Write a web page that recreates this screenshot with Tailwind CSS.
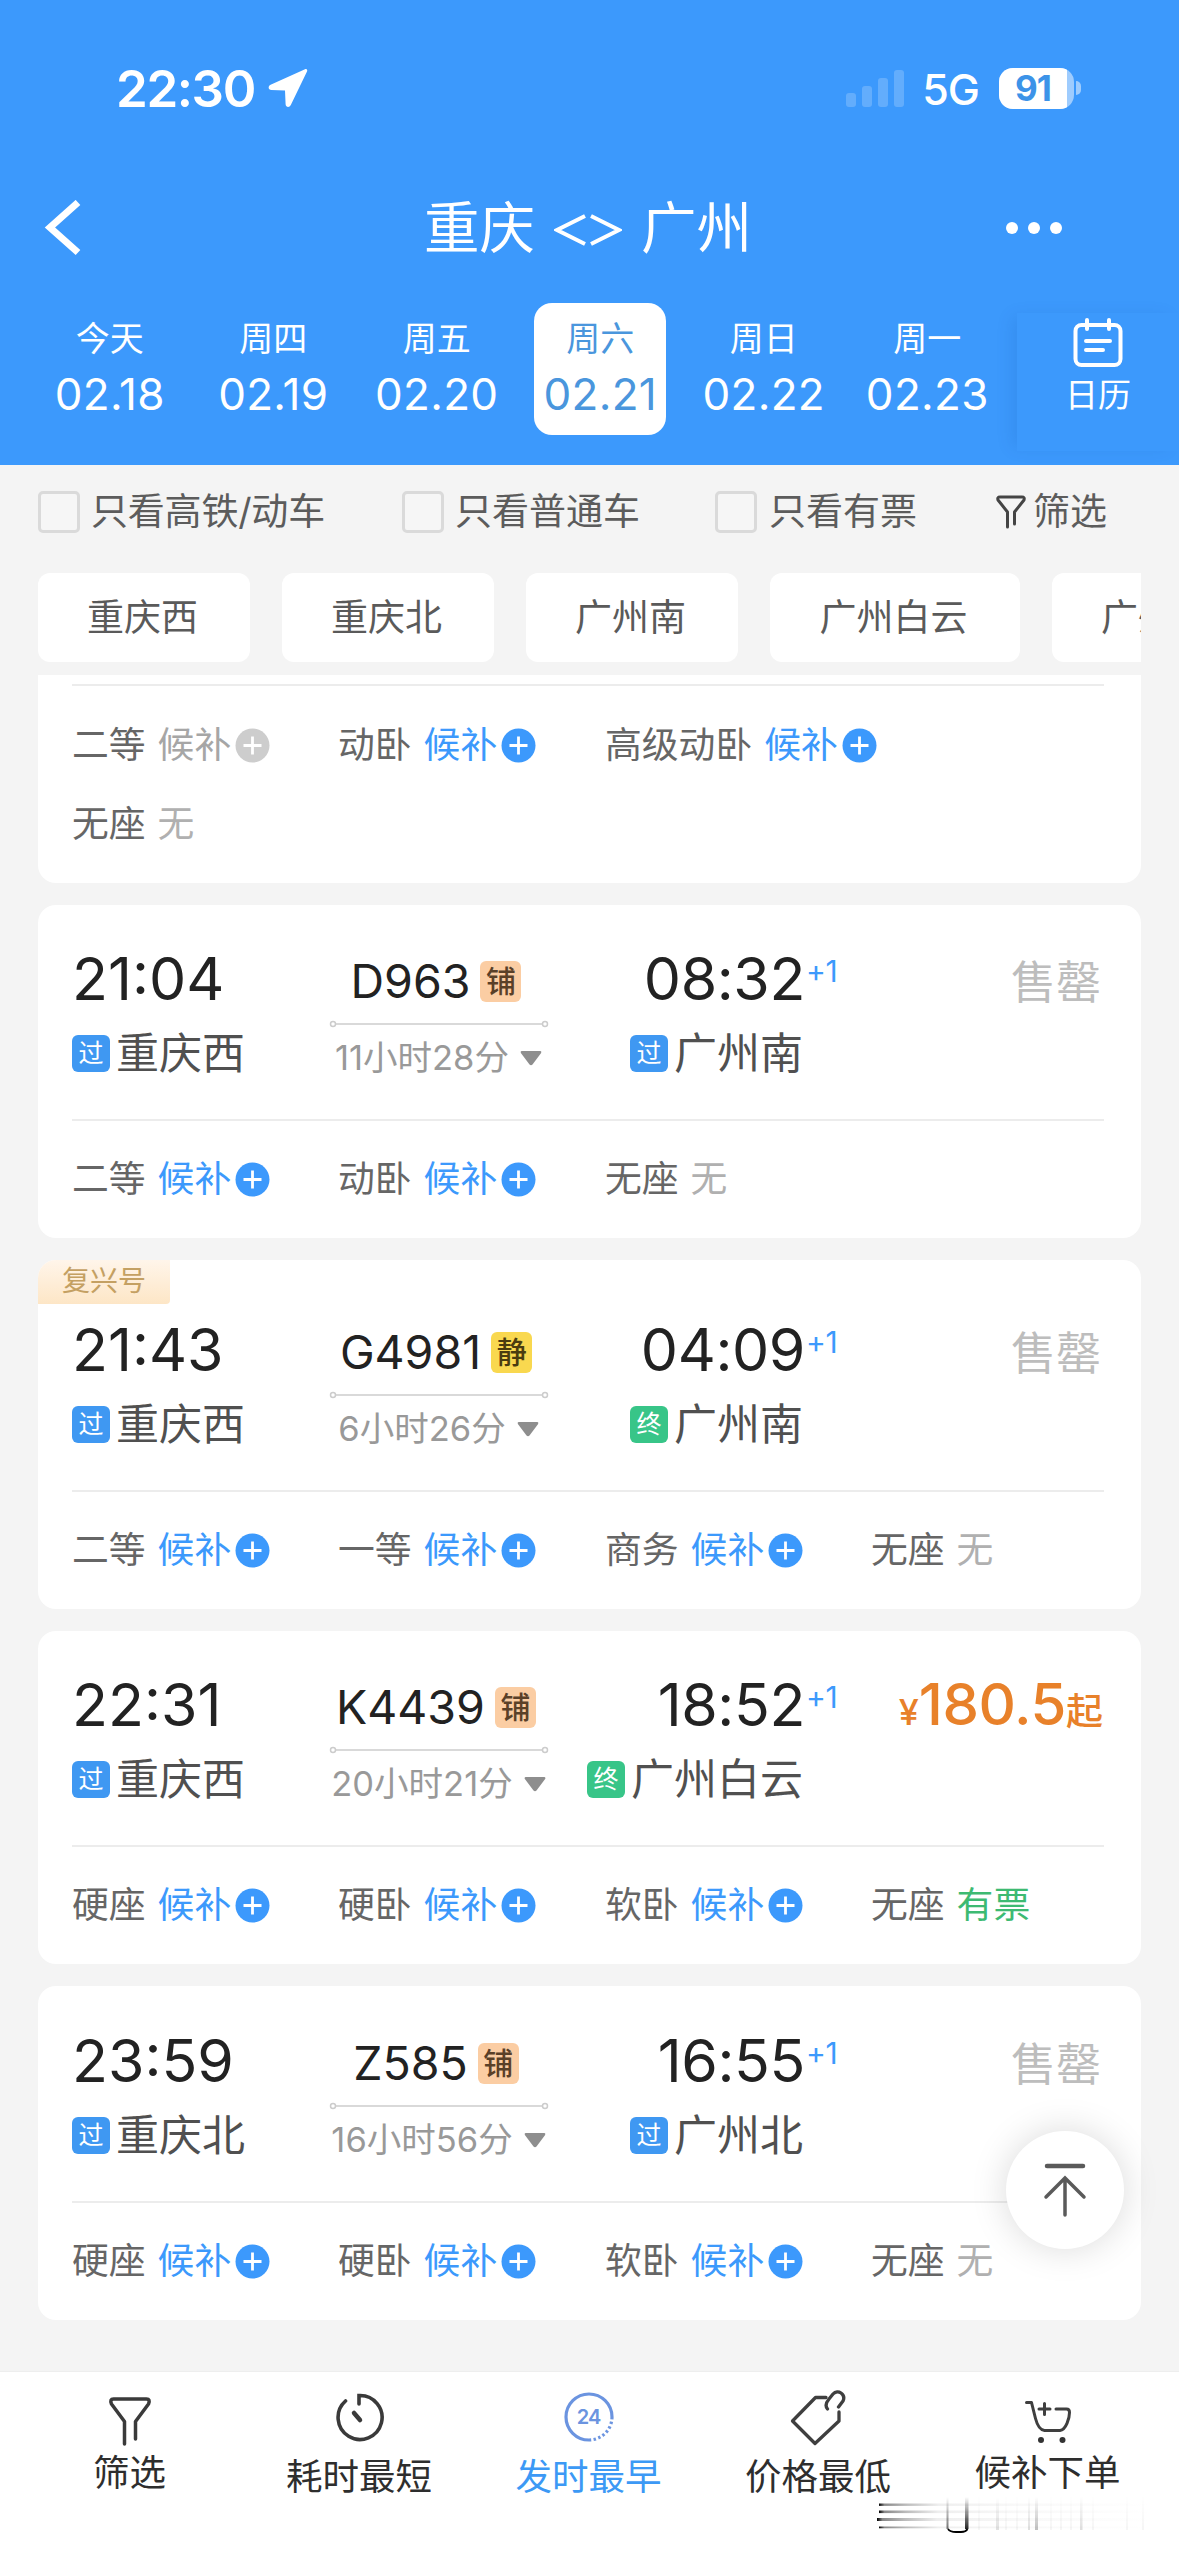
<!DOCTYPE html>
<html lang="zh-CN">
<head>
<meta charset="utf-8">
<title>重庆 - 广州</title>
<script src="https://cdn.jsdelivr.net/npm/@tailwindcss/browser@4"></script>
</head>
<body class="relative flex h-[2556px] w-[1179px] flex-col overflow-hidden bg-[#f4f4f4] font-['Inter','Noto_Sans_CJK_SC',sans-serif] whitespace-nowrap">

<header class="flex h-[465px] flex-col bg-[#3c99fc] text-white">
  <!-- status bar -->
  <div class="flex h-[176px] items-center pl-[116px] pr-[98px]">
    <span class="text-[51px] font-semibold leading-none tracking-[-1.400px]">22:30</span>
    <svg class="ml-[13px] size-10" viewBox="0 0 40 40" fill="currentColor"><path d="M37 1.200 2.600 16.800c-3 1.400-2.400 5 .8 5.200L17 22.600l.6 13.600c.2 3.200 3.800 3.800 5.200.8L39 3.400c.8-1.600-.6-2.900-2-2.200z"/></svg>
    <div class="ml-auto flex h-[38px] items-end gap-[6px]">
      <i class="h-[14px] w-[10px] rounded-[3px] bg-white/20"></i>
      <i class="h-[21px] w-[10px] rounded-[3px] bg-white/20"></i>
      <i class="h-[29px] w-[10px] rounded-[3px] bg-white/20"></i>
      <i class="h-[37px] w-[10px] rounded-[3px] bg-white/20"></i>
    </div>
    <span class="ml-[18px] mt-[3px] text-[43px] font-medium leading-none tracking-[-1px]">5G</span>
    <div class="ml-[20px] flex h-[41px] w-[75px] items-center overflow-hidden rounded-[14px] bg-white/50">
      <span class="flex h-full w-[68px] items-center justify-center bg-white text-[35px] font-bold leading-none tracking-[-1px] text-[#3c93e8]">91</span>
    </div>
    <i class="ml-[2px] h-[14px] w-[5px] rounded-r-full bg-white/50"></i>
  </div>
  <!-- title bar -->
  <div class="flex h-[103px] items-center justify-between pl-[42px] pr-[117px]">
    <svg class="h-[56px] w-[40px]" viewBox="0 0 40 56" fill="none" stroke="currentColor" stroke-width="7"><path d="M36 2.500 8 27.500l28 25"/></svg>
    <h1 class="flex items-center gap-[19px] pl-[88px] text-[55.500px] leading-none"><span>重庆</span>
      <svg class="mt-1 h-[34px] w-[68px]" viewBox="0 0 68 34" fill="none" stroke="currentColor" stroke-width="4"><path d="M31 3 3 17l28 14M37 3l28 14-28 14"/></svg><span>广州</span></h1>
    <div class="flex gap-[10px]"><i class="size-3 rounded-full bg-white"></i><i class="size-3 rounded-full bg-white"></i><i class="size-3 rounded-full bg-white"></i></div>
  </div>
  <!-- dates -->
  <div class="flex flex-1 pl-[28px] pt-[24px]">
    <div id="dates" class="flex w-[989px]"></div>
    <div class="mt-[10px] flex h-[138px] w-[162px] flex-col items-center bg-[#3c99fc] pt-[5px] shadow-[-8px_0_16px_-4px_rgba(0,60,150,0.13)]">
      <svg class="h-[50px] w-[50px]" viewBox="0 0 50 50" fill="none" stroke="currentColor" stroke-width="4" stroke-linecap="round"><rect x="2.500" y="7" width="45" height="40" rx="6"/><path d="M14 2v9M36 2v9M13 23h24M13 32h17"/></svg>
      <span class="mt-[7px] text-[33px] leading-[40px]">日历</span>
    </div>
  </div>
</header>

<section class="flex h-[93px] items-center text-[37px] leading-none text-[#5c5c5c]">
  <i class="ml-[38px] size-[42px] rounded-[5px] border-[3px] border-[#dadada] bg-[#f6f6f6]"></i><span class="ml-[11px] w-[311px] tracking-[-0.200px]">只看高铁/动车</span>
  <i class="size-[42px] rounded-[5px] border-[3px] border-[#dadada] bg-[#f6f6f6]"></i><span class="ml-[11px] w-[260px]">只看普通车</span>
  <i class="size-[42px] rounded-[5px] border-[3px] border-[#dadada] bg-[#f6f6f6]"></i><span class="ml-[12px] w-[226px]">只看有票</span>
  <svg class="h-[34px] w-[32px]" viewBox="0 0 32 34" fill="none" stroke="#444" stroke-width="3" stroke-linejoin="round" stroke-linecap="round"><path d="M12.500 32V17L3 5q-1-3 2-3h22q3 0 2 3l-9.500 12v12"/></svg>
  <span class="ml-[6px]">筛选</span>
</section>

<nav class="mx-[38px] mt-[15px] flex h-[89px] gap-[32px] overflow-hidden text-[37px] leading-none text-[#5a5a5a]">
  <a class="flex w-[212px] shrink-0 items-center justify-center rounded-xl bg-white pr-[3px] pb-px">重庆西</a>
  <a class="flex w-[212px] shrink-0 items-center justify-center rounded-xl bg-white pr-[3px] pb-px">重庆北</a>
  <a class="flex w-[212px] shrink-0 items-center justify-center rounded-xl bg-white pr-[3px] pb-px">广州南</a>
  <a class="flex w-[250px] shrink-0 items-center justify-center rounded-xl bg-white pr-[3px] pb-px">广州白云</a>
  <a class="flex w-[212px] shrink-0 items-center justify-center rounded-xl bg-white pr-[3px] pb-px">广州北</a>
</nav>

<main id="list" class="mt-[13px] flex flex-1 flex-col gap-[22px] px-[38px]"></main>

<button class="absolute left-[1006px] top-[2131px] flex size-[118px] items-center justify-center rounded-full bg-white shadow-[0_0_36px_rgba(0,0,0,0.15)]">
  <svg class="h-[56px] w-[46px]" viewBox="0 0 46 56" fill="none" stroke="#5a5a5a" stroke-width="4.500" stroke-linecap="round"><path d="M5 4h36"/><path stroke-width="3.500" d="M23 17v36M4 35l19-19 19 19"/></svg>
</button>

<footer class="relative flex h-[185px] border-t border-[#eeeeee] bg-white pl-[15px] text-[36.500px] text-[#2e2e2e]">
  <a class="flex w-[229px] flex-col items-center">
    <svg class="mt-[24px] h-[50px] w-[44px]" viewBox="0 0 44 50" fill="none" stroke="#3a3a3a" stroke-width="3.500" stroke-linecap="round" stroke-linejoin="round"><path d="M16.500 48V25.500L3.500 8q-2-5 2-5h33q4 0 2 5l-13 17.500V43"/></svg>
    <span class="mt-[7px] leading-[40px]">筛选</span>
  </a>
  <a class="flex w-[230px] flex-col items-center">
    <svg class="mt-[19px] h-[52px] w-[50px]" viewBox="0 0 50 52" fill="none" stroke="#3a3a3a" stroke-width="3.600" stroke-linecap="round"><path d="M11.500 10A22 22 0 1 0 25 4.500V13"/><path stroke-width="4.500" d="m20 22 6 7"/></svg>
    <span class="mt-[14px] leading-[40px]">耗时最短</span>
  </a>
  <a class="flex w-[229px] flex-col items-center text-[#3c99f5]">
    <div class="relative mt-[20px] flex size-[50px] items-center justify-center">
      <svg class="absolute inset-0 size-[50px]" viewBox="0 0 50 50" fill="none" stroke="#6b94e0" stroke-width="3.200"><path d="M25 48A23 23 0 1 1 48 25"/><path stroke-dasharray="2.400 2.400" d="M48 25A23 23 0 0 1 25 48"/></svg>
      <span class="text-[20px] font-semibold leading-none tracking-[-1px] text-[#6b94e0]">24</span>
    </div>
    <span class="mt-[15px] leading-[40px]">发时最早</span>
  </a>
  <a class="flex w-[230px] flex-col items-center">
    <svg class="mt-[16px] h-[58px] w-[56px]" viewBox="0 0 56 58" fill="none" stroke="#3f3f3f" stroke-width="3.300" stroke-linecap="round" stroke-linejoin="round"><path d="M36 9.500H25.500L2.500 33l22.500 22.500 24-22.500V24"/><path d="M37.500 21c-3-3.500-1-7 1.500-10l4-5c5-5.500 13 .5 10 7l-4.500 6"/></svg>
    <span class="mt-[11px] leading-[40px]">价格最低</span>
  </a>
  <a class="flex w-[229px] flex-col items-center">
    <svg class="mt-[28px] h-[44px] w-[48px]" viewBox="0 0 48 44" fill="none" stroke="#3f3f3f" stroke-width="3" stroke-linecap="round" stroke-linejoin="round"><path d="M2.500 2.500h5l4 16q3 11.500 9 12h15.500c6-.5 9.500-12.500 9.500-18q0-3.500-3-3.500H32M20.500 3.500v11M15 9h11"/><g fill="#333" stroke="none"><circle cx="17" cy="40" r="3"/><circle cx="38.500" cy="40" r="3"/></g></svg>
    <span class="mt-[9px] leading-[40px]">候补下单</span>
  </a>
  <!-- streaks in the lower corner -->
  <svg class="absolute left-[870px] top-[122px] h-[48px] w-[290px]" viewBox="0 0 290 48">
    <defs>
      <linearGradient id="h" x1="0" x2="1" y1="0" y2="0"><stop offset="0" stop-color="#000"/><stop offset=".02" stop-color="#888"/><stop offset=".1" stop-color="#bbb"/><stop offset=".22" stop-color="#eee"/><stop offset=".5" stop-color="#f8f8f8"/><stop offset="1" stop-color="#fff"/></linearGradient>
      <linearGradient id="v" x1="0" x2="0" y1="0" y2="1"><stop offset="0" stop-color="#000" stop-opacity="0"/><stop offset="1" stop-color="#000"/></linearGradient>
    </defs>
    <g fill="url(#h)"><rect x="9" y="9.500" width="270" height="2.400"/><rect x="9" y="16.500" width="270" height="2.600"/><rect x="7" y="24" width="272" height="3"/><rect x="9" y="32.500" width="270" height="1.800"/></g>
    <g fill="url(#v)"><rect x="76.500" y="3" width="2" height="32" opacity=".55"/><rect x="95" y="3" width="3.500" height="32" opacity=".85"/>
      <g opacity=".12"><rect x="126" y="3" width="3" height="33"/><rect x="158" y="3" width="2" height="33"/><rect x="210" y="3" width="2.500" height="33"/></g><rect x="165" y="3" width="3" height="33" opacity=".25"/>
      <g opacity=".03"><rect x="108" y="3" width="2" height="33"/><rect x="135" y="3" width="2" height="33"/><rect x="146" y="3" width="2" height="33"/><rect x="180" y="3" width="2" height="33"/><rect x="190" y="3" width="2" height="33"/><rect x="200" y="3" width="2" height="33"/><rect x="222" y="3" width="2" height="33"/><rect x="256" y="3" width="2" height="33"/><rect x="272" y="3" width="2" height="33"/></g></g>
    <path d="M78 35q2 3 8 3h5q5 0 6.500-3" fill="none" stroke="#000" stroke-width="1.800"/>
  </svg>
</footer>

<script>
const dates = [['今天','02.18'],['周四','02.19'],['周五','02.20'],['周六','02.21'],['周日','02.22'],['周一','02.23']];
document.getElementById('dates').innerHTML = dates.map(([w, d], i) => `
  <div class="flex w-[163.500px] shrink-0 justify-center">
    <div class="${i === 3 ? 'flex h-[132px] w-[132px] flex-col items-center rounded-[18px] bg-white pt-[16px] text-[#4a96dd]' : 'flex h-[132px] w-[132px] flex-col items-center pt-[16px]'}">
      <span class="text-[34px] leading-[40px]">${w}</span>
      <span class="mt-[12px] text-[44px] leading-[46px] tracking-[0.300px]">${d}</span>
    </div>
  </div>`).join('');

const plus = c => `<svg class="ml-[4px] size-[35px] shrink-0" viewBox="0 0 35 35"><circle cx="17.500" cy="17.500" r="17" fill="${c}"/><path d="M8.500 17.500h18M17.500 8.500v18" stroke="#fff" stroke-width="2.800"/></svg>`;
const status = {
  wait: `<span class="text-[#3c99fc]">候补</span>${plus('#3c99fc')}`,
  off: `<span class="text-[#a6a6a6]">候补</span>${plus('#cdcdcd')}`,
  none: `<span class="text-[#b0b0b0]">无</span>`,
  yes: `<span class="text-[#3dba72]">有票</span>`
};
const seat = ([n, s]) => `<div class="flex h-[79px] items-center"><span class="mr-[12px]">${n}</span>${status[s]}</div>`;
const seats = list => `<div class="grid grid-cols-[266px_267px_266px_233px] text-[36.800px] leading-none text-[#666]">${list.map(seat).join('')}</div>`;

const tag = t => t === '终'
  ? `<i class="mr-[6px] flex h-[37px] w-[38px] items-center justify-center rounded-md bg-[#38c588] text-[25px] not-italic leading-none text-white">终</i>`
  : `<i class="mr-[6px] flex h-[37px] w-[38px] items-center justify-center rounded-md bg-[#3f98f2] text-[25px] not-italic leading-none text-white">过</i>`;
const badge = b => b === '静'
  ? `<i class="ml-[10px] flex h-[41px] w-[41px] items-center justify-center rounded-md bg-[#f9d84f] text-[30px] font-medium not-italic leading-none text-[#4a3c10]">静</i>`
  : `<i class="ml-[10px] flex h-[41px] w-[41px] items-center justify-center rounded-md bg-[#fbcda3] text-[30px] font-medium not-italic leading-none text-[#5a4028]">铺</i>`;

const trains = [
  {h:333, a:'21:04', from:'重庆西', no:'D963', b:'铺', dur:'11小时28分', z:'08:32', t:'过', to:'广州南', s:[['二等','wait'],['动卧','wait'],['无座','none']]},
  {h:349, fx:1, a:'21:43', from:'重庆西', no:'G4981', b:'静', dur:'6小时26分', z:'04:09', t:'终', to:'广州南', s:[['二等','wait'],['一等','wait'],['商务','wait'],['无座','none']]},
  {h:333, a:'22:31', from:'重庆西', no:'K4439', b:'铺', dur:'20小时21分', z:'18:52', t:'终', to:'广州白云', price:'180.5', s:[['硬座','wait'],['硬卧','wait'],['软卧','wait'],['无座','yes']]},
  {h:334, a:'23:59', from:'重庆北', no:'Z585', b:'铺', dur:'16小时56分', z:'16:55', t:'过', to:'广州北', s:[['硬座','wait'],['硬卧','wait'],['软卧','wait'],['无座','none']]}
];
document.getElementById('list').innerHTML = `
<article class="h-[208px] shrink-0 rounded-b-[18px] bg-white pl-[34px] pr-[37px] pt-[9px]">
  <div class="mb-[20px] h-[2px] bg-[#ececec]"></div>
  <div class="grid grid-cols-[266px_267px_499px] text-[36.800px] leading-none text-[#666]">${[['二等','off'],['动卧','wait'],['高级动卧','wait'],['无座','none']].map(seat).join('')}</div>
</article>` + trains.map(t => `
<article class="relative flex shrink-0 flex-col justify-end overflow-hidden rounded-[18px] bg-white pl-[34px] pr-[37px] pb-[19px]" style="height:${t.h}px">
  ${t.fx ? `<div class="absolute left-0 top-0 flex h-[44px] w-[132px] items-center justify-center rounded-br-sm bg-linear-to-b from-[#fff5ea] to-[#fde6c6] pb-[2px] text-[28px] leading-none text-[#c4a062]">复兴号</div>` : ''}
  <div class="grid h-[171px] grid-cols-[260px_214px_257px_301px]">
    <div>
      <div class="pt-px text-[59px] leading-[60px] text-[#222]">${t.a}</div>
      <div class="mt-[20px] flex h-[48px] items-center text-[43px] leading-none text-[#505050]">${tag('过')}${t.from}</div>
    </div>
    <div class="flex flex-col items-center pt-[10px]">
      <div class="flex h-[46px] items-center pr-[6px] text-[46.500px] leading-none text-[#222]">${t.no}${badge(t.b)}</div>
      <svg class="mt-[16px] h-[8px] w-[220px] shrink-0" viewBox="0 0 220 8" fill="#fff" stroke="#cccccc" stroke-width="1.500"><path d="M3 4h214"/><circle cx="4" cy="4" r="2.500"/><circle cx="216" cy="4" r="2.500"/></svg>
      <div class="mt-[10px] flex h-[40px] items-center pr-[1px] text-[34.500px] leading-none text-[#999]">${t.dur}<svg class="ml-[11px] h-[15px] w-[22px]" viewBox="0 0 22 15"><path d="M1.500 0h19q1.500.5.600 2L12.500 13.500q-1.500 1.500-3 0L.900 2Q0 .5 1.500 0z" fill="#8e8e8e"/></svg></div>
    </div>
    <div class="flex flex-col items-end">
      <div class="relative -mr-[2px] pt-px text-[59px] leading-[60px] tracking-[-0.400px] text-[#222]">${t.z}<sup class="absolute left-full top-[8px] ml-[1px] text-[30px] leading-[30px] text-[#3c99fc]">+1</sup></div>
      <div class="mt-[20px] flex h-[48px] items-center text-[43px] leading-none text-[#505050]">${tag(t.t)}${t.to}</div>
    </div>
    <div class="flex items-baseline justify-end leading-[60px]">
      ${t.price ? `<span class="text-[36px] font-medium text-[#e8812a]">¥</span><span class="text-[58px] font-medium tracking-[-0.400px] text-[#e8812a]">${t.price}</span><span class="pr-[1px] text-[37px] font-medium text-[#e8812a]">起</span>` : `<span class="pr-[3px] pt-[5px] text-[45px] text-[#bdbdbd]">售罄</span>`}
    </div>
  </div>
  <div class="mb-[19px] h-[2px] bg-[#ececec]"></div>
  ${seats(t.s)}
</article>`).join('');
</script>
</body>
</html>
